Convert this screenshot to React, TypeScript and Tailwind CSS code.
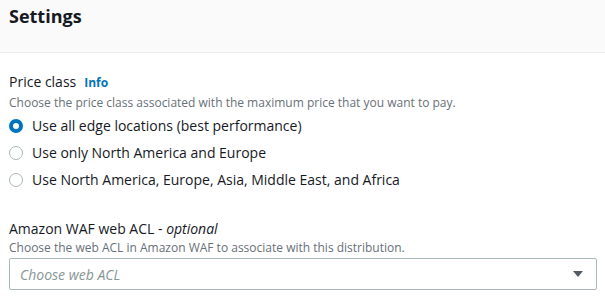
import React from "react";

const font = { fontFamily: '"Open Sans", "Noto Sans", Arial, sans-serif' };

function Radio({ checked, label }: { checked?: boolean; label: string }) {
  return (
    <div className="flex items-center h-[27px]">
      {checked ? (
        <span className="w-[14px] h-[14px] rounded-full border-[4px] border-[#0073bb] bg-white box-border ml-[9px]" />
      ) : (
        <span className="w-[14px] h-[14px] rounded-full border border-[#aab7b8] bg-white box-border ml-[9px]" />
      )}
      <span className="ml-[9px] text-[14px] text-[#16191f]">{label}</span>
    </div>
  );
}

export default function App() {
  return (
    <div className="w-[605px] h-[298px] bg-white overflow-hidden" style={font}>
      <div className="h-[53px] bg-[#fafafa] border-b border-[#eaeded] px-[9px] pt-0 flex items-start">
        <h2 className="text-[18px] font-bold text-[#16191f] leading-[33px]">Settings</h2>
      </div>
      <div className="px-[9px] pt-[18px]">
        <div className="flex items-baseline gap-[8px] leading-[22px]">
          <span className="text-[14px] text-[#16191f]">Price class</span>
          <span className="text-[12px] font-bold text-[#0073bb]">Info</span>
        </div>
        <div className="text-[12px] text-[#687078] leading-[18px]">
          Choose the price class associated with the maximum price that you want to pay.
        </div>
      </div>
      <div>
        <Radio checked label="Use all edge locations (best performance)" />
        <Radio label="Use only North America and Europe" />
        <Radio label="Use North America, Europe, Asia, Middle East, and Africa" />
      </div>
      <div className="px-[9px] pt-[25px]">
        <div className="text-[14px] text-[#16191f] leading-[21px]">
          Amazon WAF web ACL - <i>optional</i>
        </div>
        <div className="text-[12px] text-[#687078] leading-[18px]">
          Choose the web ACL in Amazon WAF to associate with this distribution.
        </div>
        <div className="mt-[1px] w-[588px] h-[32px] border border-[#aab7b8] rounded-[2px] flex items-center justify-between pl-[10px] pr-[12px]">
          <span className="text-[14px] italic text-[#879596]">Choose web ACL</span>
          <svg width="12" height="8" viewBox="0 0 12 8">
            <path d="M1 1 L11 1 L6 7 Z" fill="#545b64" />
          </svg>
        </div>
      </div>
    </div>
  );
}
